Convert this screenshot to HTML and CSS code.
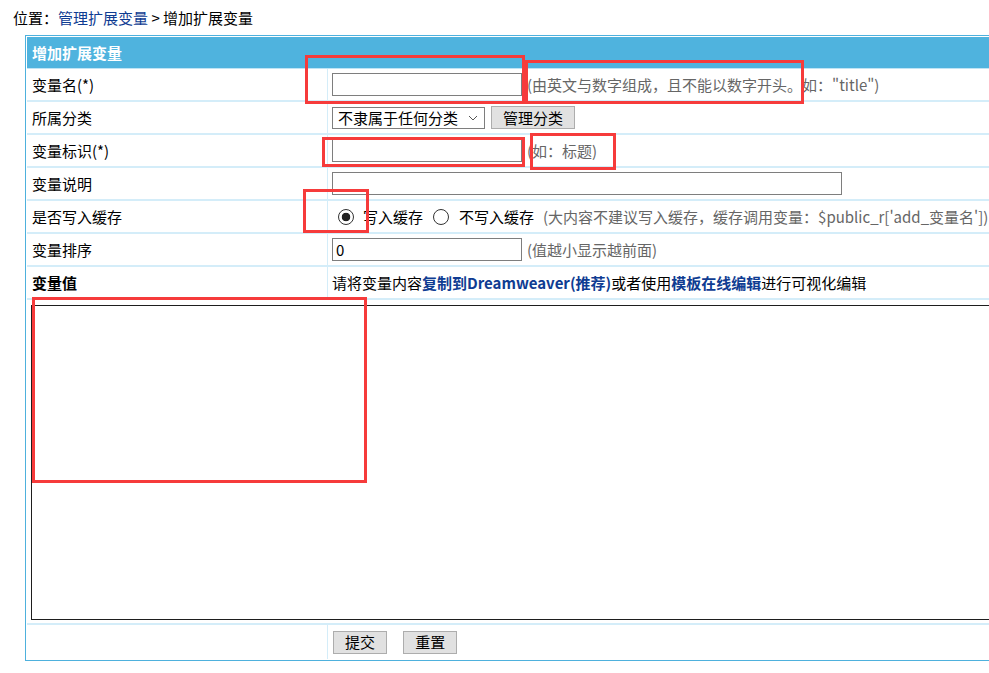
FILE: index.html
```html
<!DOCTYPE html>
<html lang="zh">
<head>
    <meta charset="UTF-8">
    <title>增加扩展变量</title>
    <link rel="stylesheet" href="styles.css">
</head>
<body>
    <div class="position">位置：<a href="#">管理扩展变量</a> &gt; 增加扩展变量</div>

    <form>
        <table class="table-form">
            <tr>
                <th colspan="2">增加扩展变量</th>
            </tr>
            <tr>
                <td class="label">变量名(*)</td>
                <td>
                    <div class="field">
                        <input type="text" class="input-text">
                        <span class="tip">(由英文与数字组成，且不能以数字开头。如："title")</span>
                    </div>
                </td>
            </tr>
            <tr>
                <td class="label">所属分类</td>
                <td>
                    <div class="field field-select">
                        <div class="select-wrap">
                            <select class="select">
                                <option>不隶属于任何分类</option>
                            </select>
                            <svg class="select-arrow" width="10" height="6" viewBox="0 0 10 6"><path d="M1 1 L5 5 L9 1" fill="none" stroke="#555" stroke-width="1"/></svg>
                        </div>
                        <button type="button" class="button">管理分类</button>
                    </div>
                </td>
            </tr>
            <tr>
                <td class="label">变量标识(*)</td>
                <td>
                    <div class="field">
                        <input type="text" class="input-text">
                        <span class="tip">(如：标题)</span>
                    </div>
                </td>
            </tr>
            <tr>
                <td class="label">变量说明</td>
                <td>
                    <div class="field">
                        <input type="text" class="input-text input-long">
                    </div>
                </td>
            </tr>
            <tr>
                <td class="label">是否写入缓存</td>
                <td>
                    <div class="field field-radio">
                        <input type="radio" name="cache" id="cache1" class="radio" checked>
                        <label for="cache1">写入缓存</label>
                        <input type="radio" name="cache" id="cache0" class="radio">
                        <label for="cache0">不写入缓存</label>
                        <span class="tip">(大内容不建议写入缓存，缓存调用变量：$public_r['add_变量名'])</span>
                    </div>
                </td>
            </tr>
            <tr>
                <td class="label">变量排序</td>
                <td>
                    <div class="field">
                        <input type="text" class="input-text" value="0">
                        <span class="tip">(值越小显示越前面)</span>
                    </div>
                </td>
            </tr>
            <tr>
                <td class="label"><strong>变量值</strong></td>
                <td>请将变量内容<b class="hl">复制到Dreamweaver(推荐)</b>或者使用<b class="hl">模板在线编辑</b>进行可视化编辑</td>
            </tr>
            <tr>
                <td colspan="2" class="editor-cell"><textarea class="editor"></textarea></td>
            </tr>
            <tr class="last-row">
                <td class="label"></td>
                <td>
                    <button type="submit" class="button btn-submit">提交</button>
                    <button type="reset" class="button btn-reset">重置</button>
                </td>
            </tr>
        </table>
    </form>

    <!-- 标注框 -->
    <div class="mark mark-1"></div>
    <div class="mark mark-2"></div>
    <div class="mark mark-3"></div>
    <div class="mark mark-4"></div>
    <div class="mark mark-5"></div>
    <div class="mark mark-6"></div>
</body>
</html>
```

FILE: styles.css
```css
* {
    margin: 0;
    padding: 0;
    box-sizing: border-box;
}

body {
    font-family: "Noto Sans CJK SC", "Liberation Sans", sans-serif;
    font-size: 15px;
    line-height: 20px;
    color: #000;
    background: #fff;
    overflow-x: hidden;
    position: relative;
}

/* 位置导航 */
.position {
    height: 35px;
    padding: 8px 0 0 13px;
}

.position a {
    color: #0f3c92;
    text-decoration: none;
}

/* 表单表格 */
.table-form {
    margin-left: 25px;
    width: 1000px;
    border: 1px solid #4eb1dd;
    padding: 1px;
    border-collapse: separate;
    border-spacing: 0;
}

.table-form th {
    height: 32px;
    background: #4fb3de;
    color: #fff;
    font-weight: bold;
    text-align: left;
    padding-left: 5px;
    border-bottom: 1px solid #bfe4f5;
}

.table-form td {
    height: 33px;
    padding: 0 0 0 4px;
    border-bottom: 2px solid #d4edf9;
    vertical-align: middle;
    white-space: nowrap;
}

.table-form td.label {
    width: 301px;
    padding-left: 5px;
    border-right: 1px solid #d4edf9;
}

.table-form .last-row td {
    height: 34px;
    border-bottom: none;
}

.field {
    display: flex;
    align-items: center;
    gap: 5px;
}

.field-select {
    gap: 6px;
}

.tip {
    color: #666;
}

.hl {
    color: #0f3c92;
}

.input-text {
    width: 190px;
    height: 23px;
    border: 1px solid #7e7e7e;
    padding: 0 3px;
    font-family: inherit;
    font-size: 15px;
    color: #000;
    outline: none;
}

.input-long {
    width: 510px;
}

/* 下拉框 */
.select-wrap {
    position: relative;
    width: 153px;
    height: 22px;
}

.select {
    appearance: none;
    -webkit-appearance: none;
    width: 100%;
    height: 100%;
    border: 1px solid #7e7e7e;
    background: #fff;
    padding: 0 0 0 5px;
    font-family: inherit;
    font-size: 15px;
    color: #000;
    line-height: 20px;
    outline: none;
}

.select-arrow {
    position: absolute;
    right: 7px;
    top: 8px;
}

.button {
    height: 23px;
    padding: 0 11px;
    border: 1px solid #adadad;
    background: #e1e1e1;
    font-family: inherit;
    font-size: 15px;
    line-height: 20px;
    color: #000;
    cursor: pointer;
}

/* 单选按钮 */
.field-radio {
    gap: 0;
}

.radio {
    appearance: none;
    -webkit-appearance: none;
    width: 16px;
    height: 16px;
    border: 1px solid #333;
    border-radius: 50%;
    background: #fff;
    margin: 0 10px 0 10px;
}

.radio:first-child {
    margin: 0 9px 0 6px;
}

.radio:checked {
    background: radial-gradient(circle, #222 0, #222 4px, #fff 4.6px);
}

.field-radio .tip {
    margin-left: 9px;
}

/* 编辑区 */
.table-form td.editor-cell {
    height: 325px;
    padding: 5px 0 0 4px;
    vertical-align: top;
}

.editor {
    display: block;
    width: 1000px;
    height: 315px;
    border: 1px solid #1e1e1e;
    resize: none;
    outline: none;
}

.btn-submit {
    margin-left: 1px;
    width: 54px;
    padding: 0;
}

.btn-reset {
    margin-left: 13px;
    width: 54px;
    padding: 0;
}

/* 红色标注框 */
.mark {
    position: absolute;
    border: 3px solid #f63b3b;
    pointer-events: none;
}

.mark-1 { left: 305px; top: 55px; width: 220px; height: 49px; }
.mark-2 { left: 525px; top: 60px; width: 279px; height: 44px; }
.mark-3 { left: 322px; top: 137px; width: 203px; height: 30px; }
.mark-4 { left: 530px; top: 133px; width: 86px; height: 37px; }
.mark-5 { left: 303px; top: 189px; width: 66px; height: 44px; }
.mark-6 { left: 32px; top: 297px; width: 335px; height: 186px; }
```
